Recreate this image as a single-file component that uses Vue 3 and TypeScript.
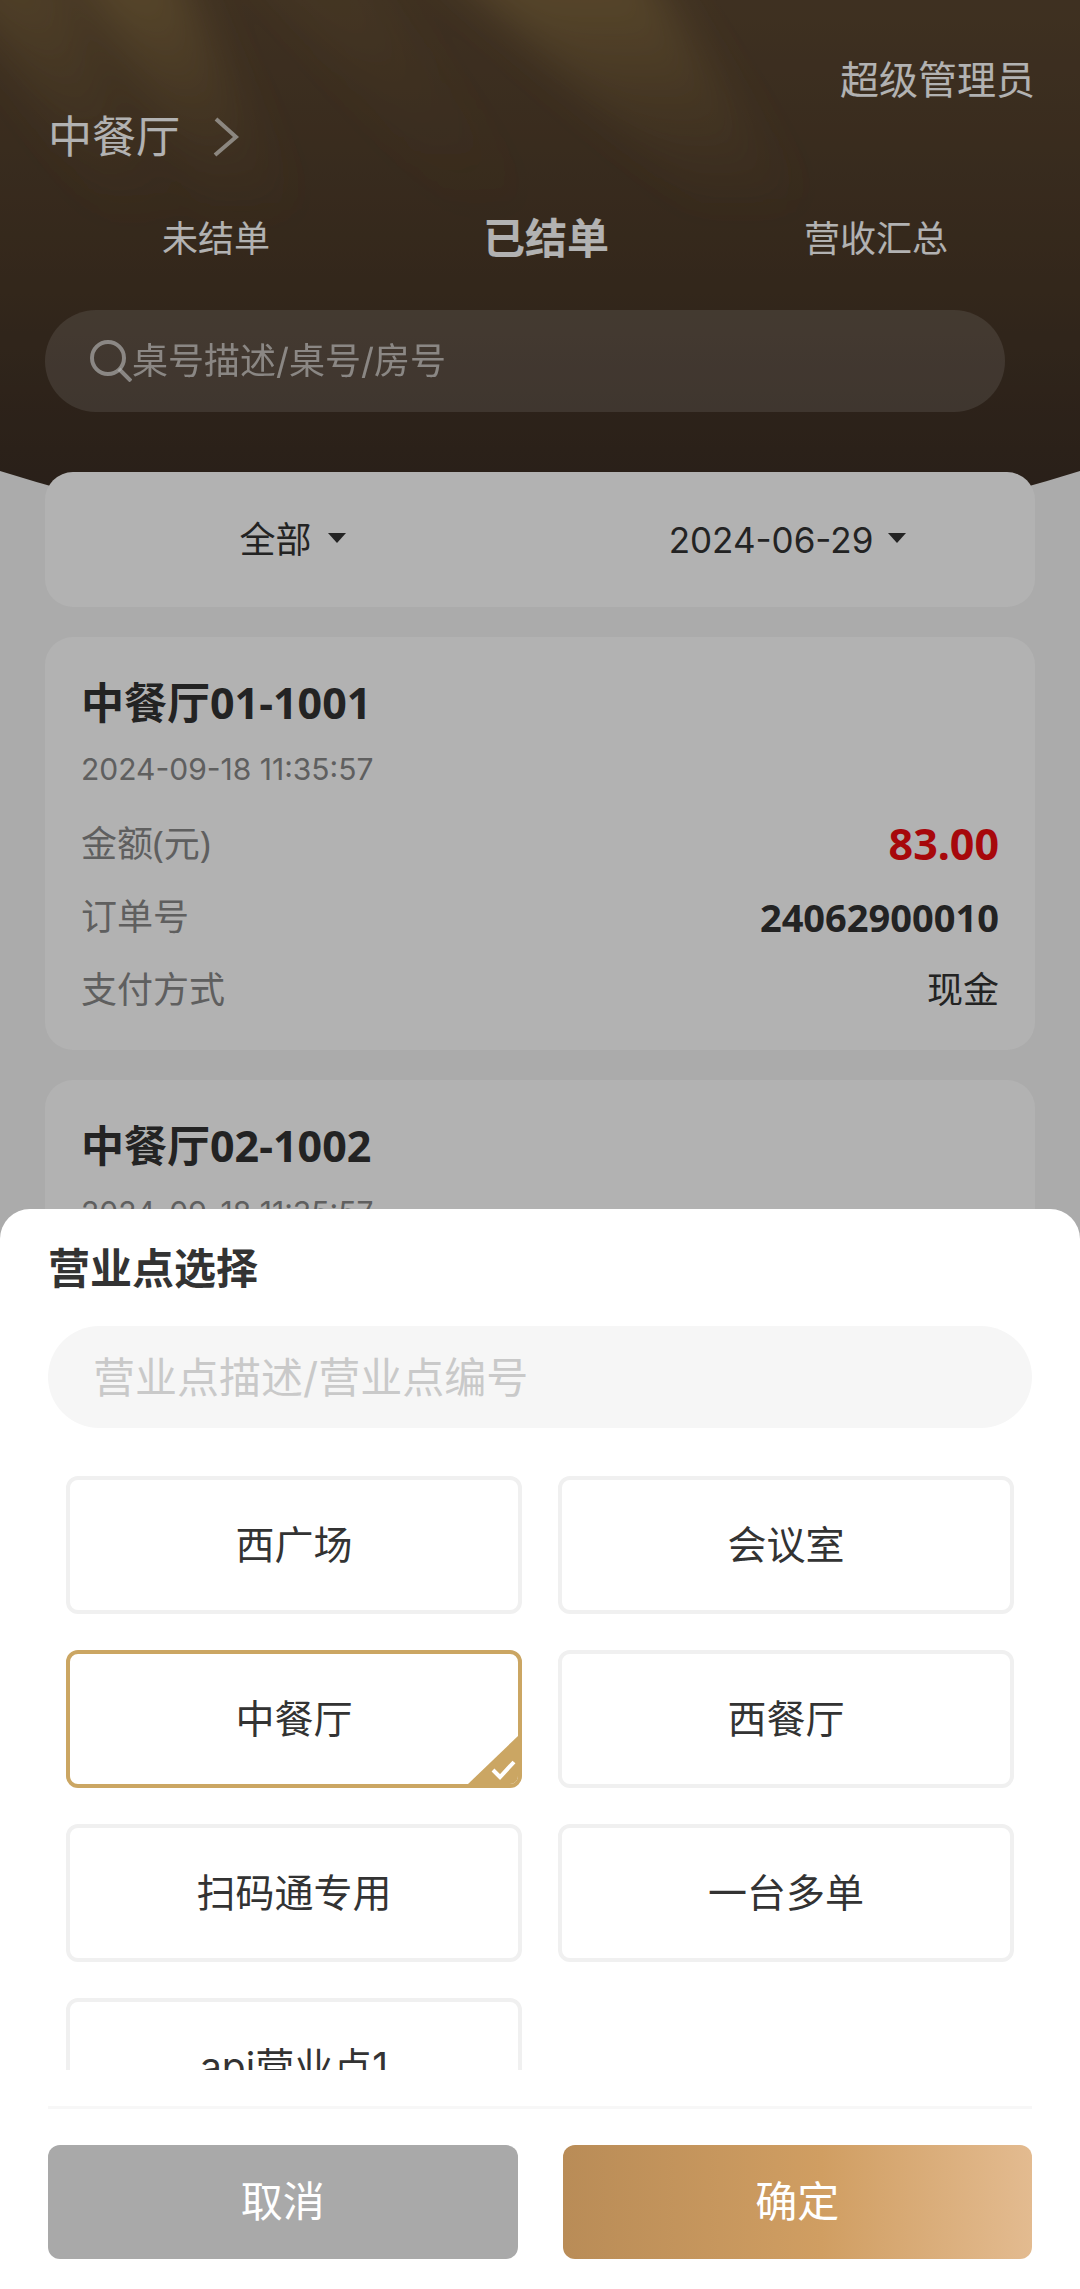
<script setup lang="ts">
import { ref } from 'vue'

interface Field {
  label: string
  value: string
  kind: 'amount' | 'number' | 'text'
}

interface Order {
  title: string
  time: string
  fields: Field[]
}

interface Outlet {
  id: string
  name: string
}

const tabs: string[] = ['未结单', '已结单', '营收汇总']
const activeTab = ref<string>('已结单')
const status = ref<string>('全部')
const keyword = ref<string>('')
const outletKeyword = ref<string>('')
const selectedOutlet = ref<string>('chinese')

const orders: Order[] = [
  {
    title: '中餐厅01-1001',
    time: '2024-09-18 11:35:57',
    fields: [
      { label: '金额(元)', value: '83.00', kind: 'amount' },
      { label: '订单号', value: '24062900010', kind: 'number' },
      { label: '支付方式', value: '现金', kind: 'text' },
    ],
  },
  { title: '中餐厅02-1002', time: '2024-09-18 11:35:57', fields: [] },
]

const outlets: Outlet[] = [
  { id: 'square', name: '西广场' },
  { id: 'meeting', name: '会议室' },
  { id: 'chinese', name: '中餐厅' },
  { id: 'western', name: '西餐厅' },
  { id: 'scan', name: '扫码通专用' },
  { id: 'multi', name: '一台多单' },
  { id: 'api', name: 'api营业点1' },
]
</script>

<template>
  <div class="page">
    <header class="header">
      <svg class="backdrop" viewBox="0 0 1080 560" preserveAspectRatio="none" aria-hidden="true">
        <defs>
          <linearGradient id="base" x1="0" y1="0" x2="0" y2="1">
            <stop offset="0" stop-color="#5a4630" />
            <stop offset="0.42" stop-color="#4d3b29" />
            <stop offset="0.8" stop-color="#3e3025" />
            <stop offset="1" stop-color="#392c22" />
          </linearGradient>
          <linearGradient id="ray" gradientUnits="userSpaceOnUse" x1="0" y1="0" x2="0" y2="220">
            <stop offset="0" stop-color="#8a7042" stop-opacity="0.7" />
            <stop offset="0.4" stop-color="#80673e" stop-opacity="0.4" />
            <stop offset="1" stop-color="#6b5438" stop-opacity="0" />
          </linearGradient>
          <filter id="soft" filterUnits="userSpaceOnUse" x="-200" y="-200" width="1480" height="800">
            <feGaussianBlur stdDeviation="20" />
          </filter>
          <clipPath id="arc">
            <path d="M0 0H1080V471Q540 640 0 471Z" />
          </clipPath>
        </defs>
        <g clip-path="url(#arc)">
          <rect width="1080" height="560" fill="url(#base)" />
          <g filter="url(#soft)" fill="url(#ray)">
            <path d="M-80 -80H30L180 220L110 220Z" opacity="0.7" />
            <path d="M50 -80H150L310 240L220 240Z" />
            <path d="M400 -80H610L800 200L700 200Z" />
            <path d="M220 -80H320L560 240L480 240Z" opacity="0.25" />
          </g>
        </g>
      </svg>

      <div class="user">超级管理员</div>
      <button class="outlet" type="button">
        <span>中餐厅</span>
        <svg width="26" height="40" viewBox="0 0 26 40" fill="none" aria-hidden="true">
          <path d="M3 2L23 20L2 38" stroke="#c9c2b8" stroke-width="4" />
        </svg>
      </button>
      <nav class="tabs">
        <button
          v-for="tab in tabs"
          :key="tab"
          type="button"
          class="tab"
          :class="{ active: tab === activeTab }"
          @click="activeTab = tab"
        >{{ tab }}</button>
      </nav>
      <label class="search">
        <svg width="42" height="42" viewBox="0 0 42 42" fill="none" stroke="#fff" stroke-opacity="0.65" stroke-width="4" aria-hidden="true">
          <circle cx="18" cy="18" r="16" />
          <path d="M29 29L41 41" />
        </svg>
        <input v-model="keyword" type="search" placeholder="桌号描述/桌号/房号" aria-label="桌号描述/桌号/房号" />
      </label>
    </header>

    <main class="content">
      <section class="card filters">
        <div class="filter">
          <select v-model="status" aria-label="全部">
            <option>全部</option>
          </select>
          <svg class="caret" width="18" height="10" viewBox="0 0 18 10" aria-hidden="true"><path d="M0 0H18L9 10Z" /></svg>
        </div>
        <div class="filter">
          <button type="button" class="date">2024-06-29</button>
          <svg class="caret" width="18" height="10" viewBox="0 0 18 10" aria-hidden="true"><path d="M0 0H18L9 10Z" /></svg>
        </div>
      </section>

      <article v-for="order in orders" :key="order.title" class="card order">
        <h2>{{ order.title }}</h2>
        <time>{{ order.time }}</time>
        <dl v-if="order.fields.length">
          <div v-for="field in order.fields" :key="field.label" class="row">
            <dt>{{ field.label }}</dt>
            <dd :class="field.kind">{{ field.value }}</dd>
          </div>
        </dl>
      </article>
    </main>

    <div class="mask">
      <section class="sheet" role="dialog" aria-labelledby="sheet-title">
        <h2 id="sheet-title">营业点选择</h2>
        <input
          v-model="outletKeyword"
          class="sheet-search"
          type="search"
          placeholder="营业点描述/营业点编号"
          aria-label="营业点描述/营业点编号"
        />
        <div class="options" role="radiogroup" aria-labelledby="sheet-title">
          <label
            v-for="item in outlets"
            :key="item.id"
            class="option"
            :class="{ selected: item.id === selectedOutlet }"
          >
            <input v-model="selectedOutlet" type="radio" name="outlet" :value="item.id" />
            <span>{{ item.name }}</span>
            <svg v-if="item.id === selectedOutlet" class="corner" width="50" height="48" viewBox="0 0 50 48" fill="none" aria-hidden="true">
              <path d="M50 0V48H0Z" fill="#cba663" />
              <path d="M25 34L32 41L46 26" stroke="#fff" stroke-width="4" />
            </svg>
          </label>
        </div>
        <footer class="actions">
          <button type="button" class="cancel">取消</button>
          <button type="button" class="confirm">确定</button>
        </footer>
      </section>
    </div>
  </div>
</template>

<style>
body {
  margin: 0;
  background: #f5f5f5;
}
</style>

<style scoped>
.page {
  min-height: 100vh;
  background: #f5f5f5;
  color: #333;
  font-family: Inter, "Noto Sans CJK SC", sans-serif;
  font-size: 36px;
  line-height: 48px;
}

.page *,
.page *::before {
  box-sizing: border-box;
}

button,
input,
select {
  margin: 0;
  padding: 0;
  border: 0;
  background: none;
  color: inherit;
  font: inherit;
  outline: none;
  appearance: none;
}

h2,
dl,
dd {
  margin: 0;
}

/* Header */
.header {
  position: relative;
  display: flex;
  flex-direction: column;
  padding: 56px 45px 60px;
  color: #fff;
}

.backdrop {
  position: absolute;
  inset: 0 0 auto;
  width: 100%;
  height: 560px;
}

.header > :not(.backdrop) {
  position: relative;
}

.user {
  align-self: flex-end;
  font-size: 39px;
}

.outlet {
  display: flex;
  align-items: center;
  align-self: flex-start;
  gap: 33px;
  margin: 9px 0 0 3px;
  font-size: 44px;
}

.tabs {
  display: grid;
  grid-template-columns: repeat(3, 1fr);
  align-items: center;
  height: 60px;
  margin: 48px -6px 41px 6px;
}

.tab {
  color: #fff;
}

.tab.active {
  font-size: 42px;
  font-weight: 700;
}

.search {
  display: flex;
  align-items: center;
  height: 102px;
  margin-right: 30px;
  padding: 0 45px;
  border-radius: 51px;
  background: rgba(255, 255, 255, 0.14);
}

.search input {
  flex: 1;
  min-width: 0;
}

.search input::placeholder {
  color: #fff;
  opacity: 0.65;
}

/* Order list */
.content {
  position: relative;
  display: flex;
  flex-direction: column;
  gap: 30px;
  padding: 0 45px;
}

.card {
  border-radius: 28px;
  background: #fff;
}

.filters {
  display: grid;
  grid-template-columns: 1fr 1fr;
  height: 135px;
}

.filter {
  display: flex;
  align-items: center;
  justify-content: center;
  gap: 15px;
}

.date {
  font-size: 35px;
}

.caret {
  margin-bottom: 3px;
  fill: #333;
}

.order {
  padding: 36px;
  font-family: "Noto Sans", "Noto Sans CJK SC", sans-serif;
}

.order h2 {
  font-size: 43px;
  line-height: 60px;
}

.order time {
  display: block;
  margin-top: 12px;
  color: #888;
  font-family: Inter, sans-serif;
  font-size: 30px;
}

.order dl {
  display: flex;
  flex-direction: column;
  gap: 25px;
  margin-top: 27px;
}

.row {
  display: flex;
  align-items: center;
  justify-content: space-between;
}

.row dt {
  color: #888;
}

.amount {
  color: #f00c10;
  font-size: 43px;
  font-weight: 700;
}

.number {
  font-size: 38px;
  font-weight: 700;
}

/* Bottom sheet */
.mask {
  position: fixed;
  inset: 0;
  display: flex;
  align-items: flex-end;
  background: rgba(0, 0, 0, 0.3);
}

.sheet {
  width: 100%;
  padding: 30px 48px;
  border-radius: 30px 30px 0 0;
  background: #fff;
}

.sheet h2 {
  font-size: 42px;
  line-height: 60px;
}

.sheet-search {
  display: block;
  width: 100%;
  height: 102px;
  margin: 27px 0 48px;
  padding: 0 45px;
  border-radius: 51px;
  background: #f6f6f6;
  font-size: 42px;
}

.sheet-search::placeholder {
  color: #c9c9c9;
  opacity: 1;
}

.options {
  display: grid;
  grid-template-columns: 1fr 1fr;
  gap: 36px;
  align-content: start;
  max-height: 594px;
  padding: 0 18px;
  overflow-y: auto;
  scrollbar-width: none;
}

.option {
  position: relative;
  display: flex;
  align-items: center;
  justify-content: center;
  height: 138px;
  border: 4px solid #f0f0f0;
  border-radius: 12px;
  overflow: hidden;
  font-size: 39px;
}

.option input {
  position: absolute;
  opacity: 0;
}

.option.selected {
  border-color: #cba663;
}

.corner {
  position: absolute;
  right: 0;
  bottom: 0;
}

.actions {
  display: grid;
  grid-template-columns: 1fr 1fr;
  gap: 45px;
  margin-top: 36px;
  padding-top: 36px;
  border-top: 3px solid #f7f7f7;
}

.actions button {
  height: 114px;
  border-radius: 12px;
  color: #fff;
  font-size: 42px;
}

.actions .cancel {
  background: #a9a9a9;
}

.actions .confirm {
  background: linear-gradient(90deg, #b98c57, #d09e62 55%, #e3bb90);
}
</style>
